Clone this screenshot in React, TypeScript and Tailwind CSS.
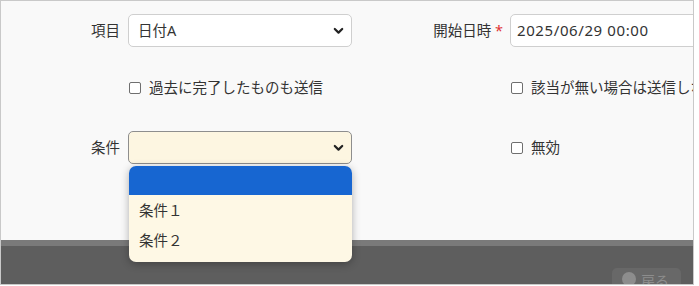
import React from "react";

const font = { fontFamily: '"Noto Sans", "Noto Sans CJK JP", sans-serif' };

function Chevron() {
  return (
    <svg width="11" height="8" viewBox="0 0 11 8" className="shrink-0">
      <path d="M1.8 2 L5.5 5.6 L9.2 2" fill="none" stroke="#222" strokeWidth="2.2" strokeLinecap="round" strokeLinejoin="round" />
    </svg>
  );
}

function Check({ label }: { label: string }) {
  return (
    <div className="flex items-center gap-[8px]">
      <span className="w-[12px] h-[12px] rounded-[2px] border border-[#6f6f6f] bg-white shrink-0" />
      <span>{label}</span>
    </div>
  );
}

export default function App() {
  return (
    <div className="w-[699px] h-[286px] bg-white text-[14.5px] text-[#333]" style={font}>
      <div className="relative w-[694px] h-[285px] border border-[#c9c9c9] bg-[#f9f9f9] flex flex-col overflow-hidden">
        <div className="flex-1 pt-[13px]">
          {/* row 1 */}
          <div className="flex items-center h-[33px] whitespace-nowrap">
            <div className="w-[119px] shrink-0 text-right">項目</div>
            <div className="ml-[8px] w-[224px] shrink-0 h-full bg-white border border-[#cfcfcf] rounded-[5px] flex items-center justify-between pl-[9px] pr-[7px]">
              <span>日付A</span>
              <Chevron />
            </div>
            <div className="w-[151px] shrink-0 text-right">
              開始日時 <span className="text-[#e03131]">*</span>
            </div>
            <div className="ml-[7px] w-[240px] shrink-0 h-full bg-white border border-[#cfcfcf] rounded-[5px] flex items-center pl-[6px] text-[15px] tracking-[0.6px]">
              2025/06/29 00:00
            </div>
          </div>

          {/* row 2 */}
          <div className="flex items-center h-[22px] mt-[30px] whitespace-nowrap">
            <div className="w-[128px] shrink-0" />
            <div className="w-[382px] shrink-0">
              <Check label="過去に完了したものも送信" />
            </div>
            <Check label="該当が無い場合は送信しない" />
          </div>

          {/* row 3 */}
          <div className="flex items-center h-[33px] mt-[32px] whitespace-nowrap">
            <div className="w-[119px] shrink-0 text-right">条件</div>
            <div className="ml-[8px] w-[224px] shrink-0 h-full bg-[#fdf6e1] border border-[#8e8e8e] rounded-[5px] flex items-center justify-end pr-[7px]">
              <Chevron />
            </div>
            <div className="w-[159px] shrink-0" />
            <Check label="無効" />
          </div>
        </div>

        {/* footer */}
        <div className="h-[44px] bg-[#5e5e5e] border-t-[6px] border-[#7a7a7a] flex justify-end pr-[12px]">
          <div className="mt-[22px] w-[69px] h-[30px] rounded-[5px] bg-[#686868] flex items-start gap-[5px] pl-[10px] pt-[2px] text-[#8d8d8d] text-[14px]">
            <span className="mt-[2px] w-[14px] h-[14px] rounded-full bg-[#8d8d8d]" />
            <span>戻る</span>
          </div>
        </div>

        {/* open dropdown */}
        <div className="absolute left-[128px] top-[165px] w-[223px] h-[96px] rounded-[7px] bg-[#fef8e5] shadow-[0_2px_8px_rgba(0,0,0,0.3)] overflow-hidden">
          <div className="h-[29px] bg-[#1766d1]" />
          <div className="h-[31px] flex items-center pl-[10px]">条件１</div>
          <div className="h-[30px] flex items-center pl-[10px]">条件２</div>
        </div>
      </div>
    </div>
  );
}
